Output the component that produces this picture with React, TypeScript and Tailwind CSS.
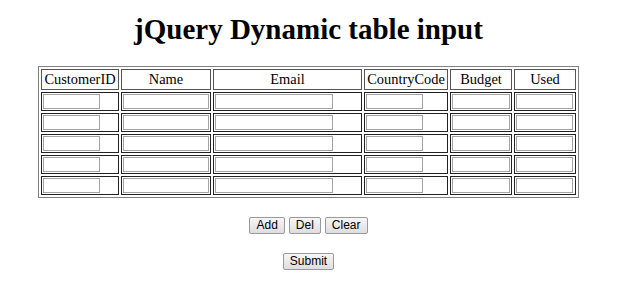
const columns = [
  { label: "CustomerID", cell: "w-[78px]", input: "w-[57px]" },
  { label: "Name", cell: "w-[88px]", input: "w-[86px]" },
  { label: "Email", cell: "w-[149px]", input: "w-[118px]" },
  { label: "CountryCode", cell: "w-[84px]", input: "w-[57px]" },
  { label: "Budget", cell: "w-[60px]", input: "w-[58px]" },
  { label: "Used", cell: "w-[62px]", input: "w-[57px]" },
];

const rows = [0, 1, 2, 3, 4];

function Btn({ children }: { children: string }) {
  return (
    <button className="h-[17px] rounded-[2px] border border-[#9a9a9a] bg-gradient-to-b from-[#f6f6f6] to-[#dedede] px-[6px] font-['Liberation_Sans',Arial,sans-serif] text-[12px] leading-[15px] text-black">
      {children}
    </button>
  );
}

export default function App() {
  return (
    <div className="h-[301px] w-[617px] bg-white font-['Liberation_Serif','Times_New_Roman',serif] text-black">
      <h1 className="pt-[13px] text-center text-[29px] font-bold leading-[33px]">jQuery Dynamic table input</h1>

      <div className="mt-[20px] flex justify-center">
        <table className="table-fixed border-separate border-spacing-[2px] border border-[#808080] text-[14.4px]">
          <thead>
            <tr>
              {columns.map((col) => (
                <th key={col.label} className={`${col.cell} border border-[#555] px-px py-px text-center font-normal leading-[17px]`}>
                  {col.label}
                </th>
              ))}
            </tr>
          </thead>
          <tbody>
            {rows.map((row) => (
              <tr key={row}>
                {columns.map((col) => (
                  <td key={col.label} className="border border-[#222] p-px align-middle leading-none">
                    <input className={`${col.input} block h-[15px] border border-[#a3a3a3] bg-white outline-none`} />
                  </td>
                ))}
              </tr>
            ))}
          </tbody>
        </table>
      </div>

      <div className="mt-[19px] flex justify-center gap-[4px]">
        <Btn>Add</Btn>
        <Btn>Del</Btn>
        <Btn>Clear</Btn>
      </div>

      <div className="mt-[19px] flex justify-center">
        <Btn>Submit</Btn>
      </div>
    </div>
  );
}
